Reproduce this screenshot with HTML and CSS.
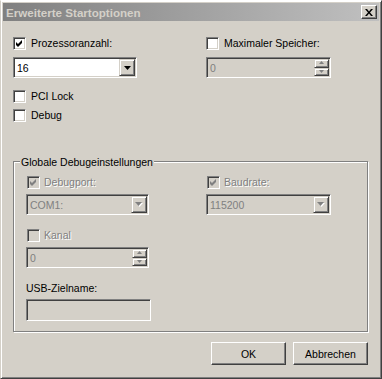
FILE: index.html
```html
<!DOCTYPE html>
<html lang="de">
<head>
<meta charset="UTF-8">
<title>Erweiterte Startoptionen</title>
<link rel="stylesheet" href="styles.css">
</head>
<body>

<div class="window">
    <div class="titlebar">
        <span class="title">Erweiterte Startoptionen</span>
        <span class="close">
            <svg width="8" height="7" viewBox="0 0 8 7"><path d="M0 0h2l2 2.5L6 0h2L5 3.5 8 7H6L4 4.5 2 7H0l3-3.5z" fill="#000"/></svg>
        </span>
    </div>

    <div class="content">
        <div class="top">
            <div class="col">
                <div class="check">
                    <span class="box"><svg width="7" height="7" viewBox="0 0 7 7"><path d="M0 2l2 2 4-4v3L2 7 0 5z" fill="#000"/></svg></span>
                    <span>Prozessoranzahl:</span>
                </div>
                <div class="field combo w124">
                    <span class="value">16</span>
                    <span class="drop"><svg width="7" height="4" viewBox="0 0 7 4"><path d="M0 0h7L3.5 4z" fill="#000"/></svg></span>
                </div>
                <div class="check pci">
                    <span class="box"></span>
                    <span>PCI Lock</span>
                </div>
                <div class="check debug">
                    <span class="box"></span>
                    <span>Debug</span>
                </div>
            </div>
            <div class="col">
                <div class="check">
                    <span class="box"></span>
                    <span>Maximaler Speicher:</span>
                </div>
                <div class="field spin disabled w125">
                    <span class="value">0</span>
                    <span class="spinbtns">
                        <span class="sb"><svg width="6" height="4" viewBox="0 0 6 4"><path d="M0 3h5L2.5 0z" fill="#808080"/></svg></span>
                        <span class="sb"><svg width="6" height="4" viewBox="0 0 6 4"><path d="M0 0h5L2.5 3z" fill="#808080"/></svg></span>
                    </span>
                </div>
            </div>
        </div>

        <div class="group">
            <div class="legend">Globale Debugeinstellungen</div>
            <div class="group-grid">
                <div class="col">
                    <div class="check off">
                        <span class="box"><svg width="7" height="7" viewBox="0 0 7 7"><path d="M0 2l2 2 4-4v3L2 7 0 5z" fill="#808080"/></svg></span>
                        <span class="dim">Debugport:</span>
                    </div>
                    <div class="field combo disabled w123 sub">
                        <span class="value">COM1:</span>
                        <span class="drop"><svg width="8" height="5" viewBox="0 0 8 5"><path d="M1 1h7L4.5 5z" fill="#fff"/><path d="M0 0h7L3.5 4z" fill="#808080"/></svg></span>
                    </div>
                    <div class="check off kanal">
                        <span class="box"></span>
                        <span class="dim">Kanal</span>
                    </div>
                    <div class="field spin disabled w123 sub">
                        <span class="value">0</span>
                        <span class="spinbtns">
                            <span class="sb"><svg width="6" height="4" viewBox="0 0 6 4"><path d="M0 3h5L2.5 0z" fill="#808080"/></svg></span>
                            <span class="sb"><svg width="6" height="4" viewBox="0 0 6 4"><path d="M0 0h5L2.5 3z" fill="#808080"/></svg></span>
                        </span>
                    </div>
                    <div class="usb-label">USB-Zielname:</div>
                    <div class="field disabled w125 usb"></div>
                </div>
                <div class="col">
                    <div class="check off">
                        <span class="box"><svg width="7" height="7" viewBox="0 0 7 7"><path d="M0 2l2 2 4-4v3L2 7 0 5z" fill="#808080"/></svg></span>
                        <span class="dim">Baudrate:</span>
                    </div>
                    <div class="field combo disabled w125 sub">
                        <span class="value">115200</span>
                        <span class="drop"><svg width="8" height="5" viewBox="0 0 8 5"><path d="M1 1h7L4.5 5z" fill="#fff"/><path d="M0 0h7L3.5 4z" fill="#808080"/></svg></span>
                    </div>
                </div>
            </div>
        </div>

        <div class="buttons">
            <div class="btn">OK</div>
            <div class="btn">Abbrechen</div>
        </div>
    </div>
</div>

</body>
</html>
```

FILE: styles.css
```css
* {
  box-sizing: border-box;
}

body {
  margin: 0;
  background: #d4d0c8;
  font-family: "Liberation Sans", Arial, sans-serif;
  font-size: 10.5px;
  color: #000;
}

.window {
  width: 382px;
  height: 379px;
  padding: 2px;
  background: #d4d0c8;
  border: 1px solid;
  border-color: #fff #404040 #404040 #d4d0c8;
  box-shadow: inset 1px 1px #fff, inset -1px -1px #808080;
}

.titlebar {
  height: 18px;
  display: flex;
  align-items: center;
  justify-content: space-between;
  padding: 0 2px 0 3px;
  background: linear-gradient(to right, #808080, #c0c0c0);
}

.title {
  color: #d4d0c8;
  font-size: 11.6px;
  font-weight: bold;
}

.close {
  width: 16px;
  height: 14px;
  display: flex;
  align-items: center;
  justify-content: center;
  background: #d4d0c8;
  border: 1px solid;
  border-color: #fff #404040 #404040 #fff;
  box-shadow: inset -1px -1px #808080;
}

.content {
  padding: 16px 0 0 10px;
}

.top {
  display: grid;
  grid-template-columns: 193px 1fr;
}

.col {
  display: flex;
  flex-direction: column;
  align-items: flex-start;
}

/* checkboxes */
.check {
  display: flex;
  align-items: center;
  gap: 5px;
  height: 13px;
  line-height: 13px;
}

.box {
  width: 13px;
  height: 13px;
  flex: none;
  display: flex;
  align-items: center;
  justify-content: center;
  background: #fff;
  border: 1px solid;
  border-color: #808080 #fff #fff #808080;
  box-shadow: inset 1px 1px #404040, inset -1px -1px #d4d0c8;
}

.check.off {
  margin-left: 1px;
  gap: 4px;
}

.check.off .box {
  background: #d4d0c8;
}

.dim {
  color: #808080;
  text-shadow: 1px 1px #fff;
}

.pci {
  margin-top: 12px;
}

.debug {
  margin-top: 6px;
}

/* sunken fields */
.field {
  height: 21px;
  display: flex;
  align-items: center;
  padding: 1px;
  background: #fff;
  border: 1px solid;
  border-color: #808080 #fff #fff #808080;
  box-shadow: inset 1px 1px #404040, inset -1px -1px #d4d0c8;
  margin-top: 7px;
}

.field.disabled {
  background: #d4d0c8;
  color: #808080;
}

.field.sub {
  margin-top: 5px;
}

.w123 { width: 123px; }
.w124 { width: 124px; }
.w125 { width: 125px; }

.value {
  padding-left: 2px;
  flex: 1;
}

.drop {
  width: 16px;
  height: 17px;
  display: flex;
  align-items: center;
  justify-content: center;
  background: #d4d0c8;
  border: 1px solid;
  border-color: #d4d0c8 #404040 #404040 #d4d0c8;
  box-shadow: inset 1px 1px #fff, inset -1px -1px #808080;
}

.spinbtns {
  width: 15px;
  height: 17px;
  display: flex;
  flex-direction: column;
}

.sb {
  flex: 1;
  display: flex;
  align-items: center;
  justify-content: center;
  background: #d4d0c8;
  border: 1px solid;
  border-color: #d4d0c8 #404040 #404040 #d4d0c8;
  box-shadow: inset 1px 1px #fff, inset -1px -1px #808080;
}

/* group box */
.group {
  width: 355px;
  margin-top: 39px;
  padding: 0 0 10px 12px;
  border: 1px solid #808080;
  box-shadow: inset 1px 1px #fff, 1px 1px #fff;
}

.legend {
  width: max-content;
  margin: -6px 0 0 -6px;
  padding: 0 1px;
  line-height: 13px;
  background: #d4d0c8;
}

.group-grid {
  display: grid;
  grid-template-columns: 180px 1fr;
  margin-top: 7px;
}

.kanal {
  margin-top: 14px;
}

.usb-label {
  margin-top: 14px;
  line-height: 13px;
}

.field.usb {
  height: 22px;
  margin-top: 4px;
}

/* buttons */
.buttons {
  width: 355px;
  margin-top: 10px;
  display: flex;
  justify-content: flex-end;
  gap: 7px;
}

.btn {
  width: 75px;
  height: 23px;
  display: flex;
  align-items: center;
  justify-content: center;
  background: #d4d0c8;
  border: 1px solid;
  border-color: #fff #404040 #404040 #fff;
  box-shadow: inset -1px -1px #808080, inset 1px 1px #d4d0c8;
}
```
